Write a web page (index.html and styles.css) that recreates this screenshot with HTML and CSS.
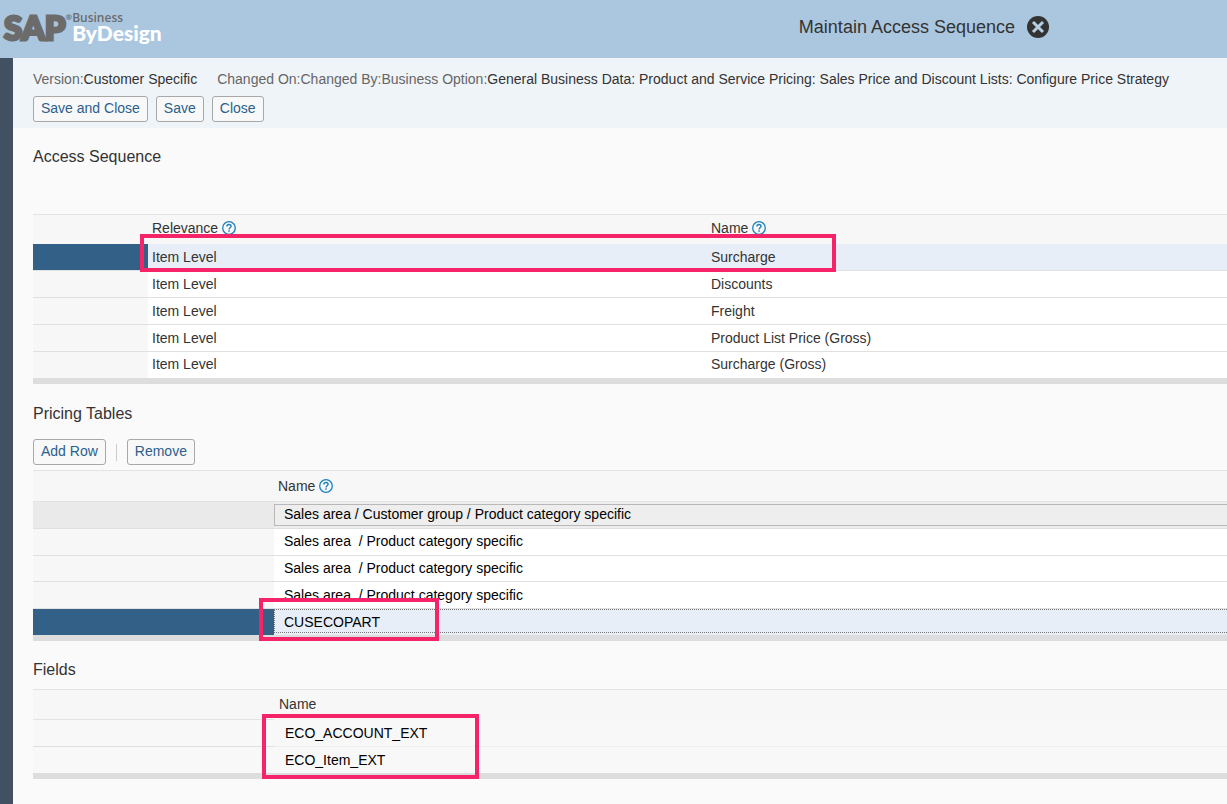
FILE: index.html
```html
<!DOCTYPE html>
<html lang="en">
<head>
<meta charset="utf-8">
<title>Maintain Access Sequence</title>
<link rel="stylesheet" href="styles.css">
</head>
<body>
<svg class="sprite" aria-hidden="true">
  <symbol id="help" viewBox="0 0 14 14">
    <circle cx="7" cy="7" r="6.3" fill="none" stroke="#1a80bd" stroke-width="1.3"/>
    <path d="M4.9 5.5c0-1.3.9-2 2.1-2s2.1.7 2.1 1.8c0 1.5-2 1.5-2 3.1" fill="none" stroke="#1a80bd" stroke-width="1.4"/>
    <rect x="6.3" y="9.3" width="1.5" height="1.5" fill="#1a80bd"/>
  </symbol>
</svg>
<header class="shell">
  <div class="logo">
    <span class="logo-sap">SAP</span>
    <span class="logo-reg">®</span>
    <span class="logo-product"><span class="logo-business">Business</span><span class="logo-bydesign">ByDesign</span></span>
  </div>
  <div class="shell-title">
    <h1>Maintain Access Sequence</h1>
    <button class="close-icon" type="button" aria-label="Close window">
      <svg viewBox="0 0 22 22"><circle cx="11" cy="11" r="11" fill="#333"/><path d="M6 6l10 10M16 6L6 16" stroke="#b5cfe3" stroke-width="3"/></svg>
    </button>
  </div>
</header>
<div class="body">
  <div class="rail"></div>
  <main>
    <section class="info">
      <div class="facts">
        <span class="fact"><span class="label">Version:</span>Customer Specific</span>
        <span class="fact"><span class="label">Changed On:</span><span class="label">Changed By:</span><span class="label">Business Option:</span>General Business Data: Product and Service Pricing: Sales Price and Discount Lists: Configure Price Strategy</span>
      </div>
      <div class="toolbar">
        <button class="btn" type="button">Save and Close</button>
        <button class="btn" type="button">Save</button>
        <button class="btn" type="button">Close</button>
      </div>
    </section>

    <section class="panel access">
      <h2>Access Sequence</h2>
      <div class="grid">
        <table>
          <colgroup><col class="c-narrow"><col class="c-relevance"><col></colgroup>
          <thead><tr><th></th><th>Relevance <svg class="help"><use href="#help"/></svg></th><th>Name <svg class="help"><use href="#help"/></svg></th></tr></thead>
          <tbody>
            <tr class="selected"><td></td><td>Item Level</td><td>Surcharge</td></tr>
            <tr><td></td><td>Item Level</td><td>Discounts</td></tr>
            <tr><td></td><td>Item Level</td><td>Freight</td></tr>
            <tr><td></td><td>Item Level</td><td>Product List Price (Gross)</td></tr>
            <tr><td></td><td>Item Level</td><td>Surcharge (Gross)</td></tr>
          </tbody>
        </table>
        <div class="mark mark-surcharge"></div>
      </div>
    </section>

    <section class="panel pricing">
      <h2>Pricing Tables</h2>
      <div class="toolbar">
        <button class="btn" type="button">Add Row</button>
        <span class="sep"></span>
        <button class="btn" type="button">Remove</button>
      </div>
      <div class="grid">
        <table>
          <colgroup><col class="c-wide"><col></colgroup>
          <thead><tr><th></th><th>Name <svg class="help"><use href="#help"/></svg></th></tr></thead>
          <tbody>
            <tr class="hovered"><td></td><td><input aria-label="Name, row 1" value="Sales area / Customer group / Product category specific"></td></tr>
            <tr><td></td><td><input aria-label="Name, row 2" value="Sales area  / Product category specific"></td></tr>
            <tr class="short"><td></td><td><input aria-label="Name, row 3" value="Sales area  / Product category specific"></td></tr>
            <tr><td></td><td><input aria-label="Name, row 4" value="Sales area  / Product category specific"></td></tr>
            <tr class="selected"><td></td><td><input aria-label="Name, row 5" value="CUSECOPART"></td></tr>
          </tbody>
        </table>
        <div class="mark mark-part"></div>
      </div>
    </section>

    <section class="panel fields">
      <h2>Fields</h2>
      <div class="grid">
        <table>
          <colgroup><col class="c-wide"><col></colgroup>
          <thead><tr><th></th><th>Name</th></tr></thead>
          <tbody>
            <tr><td></td><td>ECO_ACCOUNT_EXT</td></tr>
            <tr><td></td><td>ECO_Item_EXT</td></tr>
          </tbody>
        </table>
        <div class="mark mark-fields"></div>
      </div>
    </section>
  </main>
</div>
</body>
</html>
```
FILE: styles.css
```css
* { box-sizing: border-box; }
body {
  margin: 0;
  min-height: 100vh;
  display: flex;
  flex-direction: column;
  font: 14px/16px "Liberation Sans", Arial, sans-serif;
  color: #333;
  background: #fafafa;
}
h1, h2 { margin: 0; font-weight: normal; }
.sprite { position: absolute; width: 0; height: 0; }

.shell {
  height: 58px;
  display: flex;
  justify-content: space-between;
  background: #abc7df;
}
.logo {
  display: flex;
  align-items: flex-start;
  padding: 11px 0 0 4px;
  color: #6b6b6b;
}
.logo-sap { font: 900 33px/32px Lato, sans-serif; -webkit-text-stroke: 3px #6b6b6b; }
.logo-reg { font: 700 8px/12px Lato, sans-serif; }
.logo-product { display: flex; flex-direction: column; }
.logo-business { font: 600 12px/14px "Open Sans", sans-serif; }
.logo-bydesign { font: 900 21px/15px Lato, sans-serif; color: #fff; }
.shell-title {
  display: flex;
  align-items: center;
  gap: 12px;
  padding: 0 178px 4px 0;
}
.shell-title h1 { font-size: 18px; line-height: 22px; }
.close-icon { width: 22px; height: 22px; padding: 0; border: 0; background: none; }
.close-icon svg { display: block; width: 22px; height: 22px; }

.body { flex: 1; display: flex; }
.rail { width: 13px; flex: none; background: #415161; }
main { flex: 1; min-width: 0; }

.info { padding: 13px 20px 6px; background: #eff4f9; }
.facts { display: flex; gap: 20px; white-space: nowrap; }
.label { color: #666; }
.toolbar { display: flex; align-items: center; gap: 8px; }
.info .toolbar { padding-top: 9px; }
.btn {
  height: 26px;
  padding: 0 7px 2px;
  font: inherit;
  color: #2c5f8c;
  background: #f8f8f8;
  border: 1px solid #a8a8a8;
  border-radius: 3px;
}
.sep { width: 1px; height: 17px; background: #ccc; }

.panel { padding-left: 20px; }
.panel h2 { font-size: 16px; line-height: 20px; }
.access { padding-top: 19px; }
.access .grid { margin-top: 47px; }
.pricing { padding-top: 20px; }
.pricing .toolbar { padding-top: 15px; gap: 10px; }
.pricing .grid { margin-top: 5px; }
.fields { padding-top: 19px; }
.fields .grid { margin-top: 9px; }

.grid { position: relative; border-bottom: 6px solid #ddd; }
table { width: 100%; table-layout: fixed; border-collapse: separate; border-spacing: 0; }
.c-narrow { width: 115px; }
.c-relevance { width: 559px; }
.c-wide { width: 241px; }
th, td { padding: 0 4px; text-align: left; font-weight: normal; white-space: nowrap; }
th { height: 30px; padding-bottom: 3px; background: #f7f7f7; border-top: 1px solid #e3e3e3; }
td { height: 27px; background: #fff; border-bottom: 1px solid #e0e0e0; }
td:first-child { background: #f7f7f7; }
tbody tr:last-child td { height: 26px; border-bottom: 0; }
tr.selected td { background: #e8eef7; }
tr.selected td:first-child { background: #336087; }
.help { width: 14px; height: 14px; vertical-align: -2px; }

.access tbody tr:last-child td { padding-bottom: 2px; }

.pricing th { height: 32px; padding-bottom: 1px; border-bottom: 1px solid #e3e3e3; }
.pricing td { padding: 0; vertical-align: top; color: #000; }
.pricing tr.short td { height: 26px; }
.pricing tr.hovered td { background: #eee; }
.pricing tr.hovered td:first-child { background: #eaeaea; }
.pricing input {
  display: block;
  width: 100%;
  height: 24px;
  padding: 0 9px;
  font: inherit;
  color: #000;
  background: transparent;
  border: 1px solid transparent;
  border-right: 0;
  outline: 0;
}
.pricing tr.hovered td { padding-top: 2px; }
.pricing tr.hovered input { height: 22px; padding-bottom: 2px; border-color: #b8b8b8; }
.pricing tr.short + tr input { padding-top: 2px; }
.pricing tr.selected input { padding-top: 2px; border: 1px dotted #777; border-right: 0; }

.fields th { height: 31px; }
.fields th:first-child { border-bottom: 1px solid #e3e3e3; }
.fields th:last-child { padding-left: 5px; }
.fields td, .fields td:last-child { background: #f8f8f8; }
.fields td:last-child { padding-left: 11px; color: #000; border-bottom-color: #eee; }

.mark { position: absolute; border: 4px solid #f52469; }
.mark-surcharge { left: 107px; top: 20px; width: 696px; height: 38px; }
.mark-part { left: 226px; bottom: -6px; width: 180px; height: 43px; }
.mark-fields { left: 229px; bottom: -6px; width: 217px; height: 65px; }
```
